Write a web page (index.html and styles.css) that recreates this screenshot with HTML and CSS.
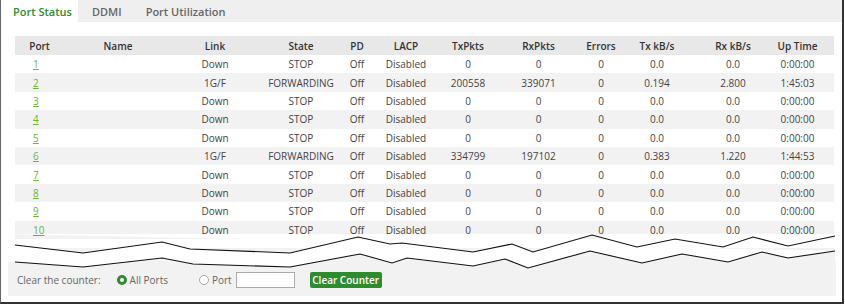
FILE: index.html
```html
<!DOCTYPE html>
<html lang="en">
<head>
    <meta charset="UTF-8">
    <title>Port Status</title>
    <link rel="stylesheet" href="styles.css">
</head>
<body>
    <div class="frame">
        <div class="tab-bar">
            <span class="tab active">Port Status</span>
            <span class="tab">DDMI</span>
            <span class="tab">Port Utilization</span>
        </div>

        <div class="panel">
            <table class="port-table">
                <colgroup>
                    <col style="width: 49px">
                    <col style="width: 108px">
                    <col style="width: 86px">
                    <col style="width: 86px">
                    <col style="width: 26px">
                    <col style="width: 72px">
                    <col style="width: 52px">
                    <col style="width: 89px">
                    <col style="width: 36px">
                    <col style="width: 76px">
                    <col style="width: 76px">
                    <col style="width: 63px">
                </colgroup>
                <thead>
                    <tr>
                        <th>Port</th><th>Name</th><th>Link</th><th>State</th><th>PD</th><th>LACP</th>
                        <th>TxPkts</th><th>RxPkts</th><th>Errors</th><th>Tx kB/s</th><th>Rx kB/s</th><th class="up">Up Time</th>
                    </tr>
                </thead>
                <tbody>
                    <tr><td class="port"><a href="#">1</a></td><td></td><td>Down</td><td>STOP</td><td>Off</td><td>Disabled</td><td>0</td><td>0</td><td>0</td><td>0.0</td><td>0.0</td><td class="up">0:00:00</td></tr>
                    <tr><td class="port"><a href="#">2</a></td><td></td><td>1G/F</td><td>FORWARDING</td><td>Off</td><td>Disabled</td><td>200558</td><td>339071</td><td>0</td><td>0.194</td><td>2.800</td><td class="up">1:45:03</td></tr>
                    <tr><td class="port"><a href="#">3</a></td><td></td><td>Down</td><td>STOP</td><td>Off</td><td>Disabled</td><td>0</td><td>0</td><td>0</td><td>0.0</td><td>0.0</td><td class="up">0:00:00</td></tr>
                    <tr><td class="port"><a href="#">4</a></td><td></td><td>Down</td><td>STOP</td><td>Off</td><td>Disabled</td><td>0</td><td>0</td><td>0</td><td>0.0</td><td>0.0</td><td class="up">0:00:00</td></tr>
                    <tr><td class="port"><a href="#">5</a></td><td></td><td>Down</td><td>STOP</td><td>Off</td><td>Disabled</td><td>0</td><td>0</td><td>0</td><td>0.0</td><td>0.0</td><td class="up">0:00:00</td></tr>
                    <tr><td class="port"><a href="#">6</a></td><td></td><td>1G/F</td><td>FORWARDING</td><td>Off</td><td>Disabled</td><td>334799</td><td>197102</td><td>0</td><td>0.383</td><td>1.220</td><td class="up">1:44:53</td></tr>
                    <tr><td class="port"><a href="#">7</a></td><td></td><td>Down</td><td>STOP</td><td>Off</td><td>Disabled</td><td>0</td><td>0</td><td>0</td><td>0.0</td><td>0.0</td><td class="up">0:00:00</td></tr>
                    <tr><td class="port"><a href="#">8</a></td><td></td><td>Down</td><td>STOP</td><td>Off</td><td>Disabled</td><td>0</td><td>0</td><td>0</td><td>0.0</td><td>0.0</td><td class="up">0:00:00</td></tr>
                    <tr><td class="port"><a href="#">9</a></td><td></td><td>Down</td><td>STOP</td><td>Off</td><td>Disabled</td><td>0</td><td>0</td><td>0</td><td>0.0</td><td>0.0</td><td class="up">0:00:00</td></tr>
                    <tr><td class="port"><a href="#">10</a></td><td></td><td>Down</td><td>STOP</td><td>Off</td><td>Disabled</td><td>0</td><td>0</td><td>0</td><td>0.0</td><td>0.0</td><td class="up">0:00:00</td></tr>
                </tbody>
            </table>

            <!-- torn edge: the list goes on below -->
            <div class="break">
                <svg class="break-lines" width="841" height="45" viewBox="0 0 841 45">
                    <rect x="7" y="14" width="827" height="31" fill="#f2f2f2"/>
                    <polygon fill="#fff" points="0,0 841,0 834,2 787,12 752,3 722,13 674,5 636,13 591,1 532,18 511,10 472,18 401,9 389,10 357,3 289,19 189,15 161,8 82,19 14,11 0,11 0,28 14,28 82,33 161,24 192,30 289,33 359,20 391,29 406,24 472,32 504,25 527,34 589,17 641,29 681,20 727,28 761,18 787,24 834,17 841,17"/>
                    <polyline fill="none" stroke="#111" stroke-width="1.1" points="14,11 82,19 161,8 189,15 289,19 357,3 389,10 401,9 472,18 511,10 532,18 591,1 636,13 674,5 722,13 752,3 787,12 834,2"/>
                    <polyline fill="none" stroke="#111" stroke-width="1.1" points="14,28 82,33 161,24 192,30 289,33 359,20 391,29 406,24 472,32 504,25 527,34 589,17 641,29 681,20 727,28 761,18 787,24 834,17"/>
                </svg>
            </div>

            <div class="counter-bar">
                <span class="counter-label">Clear the counter:</span>
                <label class="radio all"><span class="dot checked"></span>All Ports</label>
                <label class="radio"><span class="dot"></span>Port</label>
                <input type="text" class="port-input">
                <button class="clear-btn">Clear Counter</button>
            </div>
        </div>
    </div>
</body>
</html>
```

FILE: styles.css
```css
* {
    margin: 0;
    padding: 0;
    box-sizing: border-box;
}

body {
    font-family: 'Open Sans', 'Liberation Sans', sans-serif;
    font-size: 10px;
    color: #444;
    background: #fff;
}

.frame {
    width: 844px;
    height: 304px;
    border-left: 1px solid #666;
    border-right: 2px solid #333;
    border-bottom: 2px solid #333;
    display: flex;
    flex-direction: column;
}

.tab-bar {
    height: 22px;
    background: #efefef;
    display: flex;
    align-items: stretch;
}

.tab {
    padding: 0 10px 0 14px;
    display: flex;
    align-items: center;
    font-size: 11px;
    font-weight: 600;
    color: #666;
    white-space: nowrap;
}

.tab.active {
    width: 77px;
    padding-left: 12px;
    background: #fff;
    color: #2e8b2e;
}

.panel {
    flex: 1;
    display: flex;
    flex-direction: column;
}

.port-table {
    margin: 14px 0 0 14px;
    width: 819px;
    border-collapse: collapse;
    table-layout: fixed;
}

.port-table th,
.port-table td {
    text-align: center;
    white-space: nowrap;
    padding: 0;
}

.port-table th {
    height: 19px;
    background: #e8e8e8;
    font-weight: 600;
    color: #333;
}

.port-table tbody tr {
    height: 18.4px;
}

.port-table tbody tr:nth-child(even) {
    background: #f2f2f2;
}

.port-table td.port {
    text-align: left;
    padding-left: 18px;
}

.port-table th.up,
.port-table td.up {
    padding-right: 10px;
}

.port-table a {
    color: #6cb52d;
    text-decoration: underline;
}

.break {
    position: relative;
    height: 22px;
}

.break-lines {
    position: absolute;
    left: 0;
    top: -5px;
    z-index: 1;
}

.counter-bar {
    margin: 0 6px 0 7px;
    height: 35px;
    background: #f2f2f2;
    display: flex;
    align-items: center;
    padding: 3px 0 0 9px;
    color: #666;
}

/* keep the controls above the torn-edge drawing */
.counter-bar > * {
    position: relative;
    z-index: 2;
}

.counter-label {
    margin-right: 16px;
}

.radio {
    display: flex;
    align-items: center;
    gap: 3px;
    margin-right: 4px;
}

.radio.all {
    margin-right: 31px;
}

.dot {
    width: 10px;
    height: 10px;
    border-radius: 50%;
    border: 1px solid #aaa;
    background: #fff;
}

.dot.checked {
    border: 3px solid #2e8b2e;
}

.port-input {
    width: 59px;
    height: 16px;
    border: 1px solid #aaa;
    background: #fff;
    margin-right: 15px;
}

.clear-btn {
    height: 16px;
    width: 72px;
    border: none;
    border-radius: 2px;
    background: #2e8b2e;
    color: #fff;
    font-family: inherit;
    font-size: 10px;
    font-weight: 600;
    white-space: nowrap;
}
```
